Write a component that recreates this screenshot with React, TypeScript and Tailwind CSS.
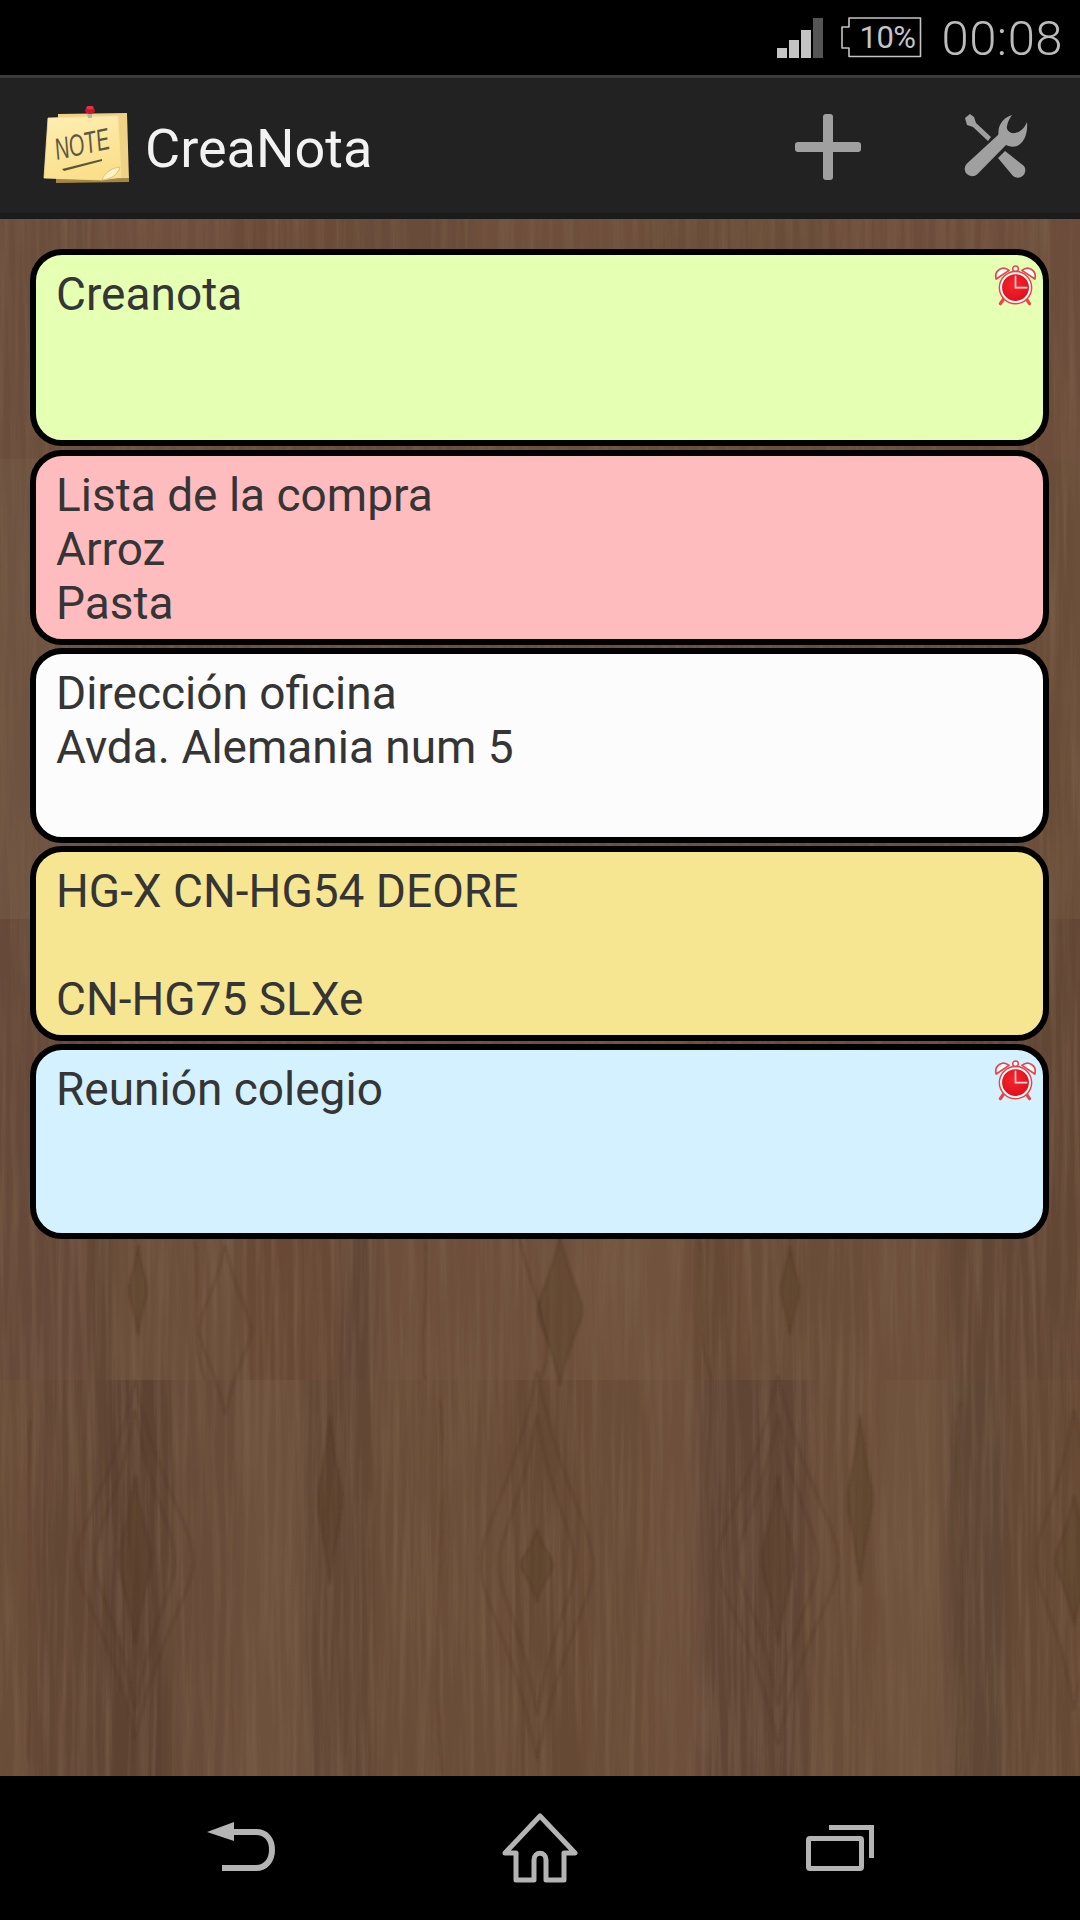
import React from 'react'

const rows = [
  {
    y: 219,
    h: 240,
    bands: [[0, 95, '#6b4e3a'], [95, 230, '#6e503c'], [230, 340, '#6a4c38'], [340, 470, '#684b37'], [470, 640, '#6d4f3b'], [640, 820, '#6b4d39'], [820, 1080, '#6c4e3a']],
  },
  {
    y: 459,
    h: 460,
    bands: [[0, 100, '#6e523f'], [100, 260, '#6a4d39'], [260, 400, '#70533e'], [400, 620, '#6c4f3a'], [620, 800, '#6e503c'], [800, 1080, '#6a4d39']],
  },
  {
    y: 919,
    h: 461,
    bands: [[0, 95, '#664a37'], [95, 110, '#5e4433'], [110, 240, '#6c4f3a'], [240, 340, '#674a36'], [340, 375, '#604534'], [375, 580, '#6d503a'], [580, 690, '#71533e'], [690, 740, '#664935'], [740, 870, '#6a4d38'], [870, 945, '#6d4f3a'], [945, 1080, '#634734']],
  },
  {
    y: 1380,
    h: 396,
    bands: [[0, 30, '#6b4e39'], [30, 100, '#634735'], [100, 170, '#5d4231'], [170, 240, '#684b37'], [240, 305, '#6e513c'], [305, 375, '#624735'], [375, 510, '#6a4d39'], [510, 585, '#664935'], [585, 650, '#6a4e39'], [650, 700, '#6d503a'], [700, 810, '#604534'], [810, 880, '#6a4d39'], [880, 945, '#70533e'], [945, 1010, '#614634'], [1010, 1080, '#664935']],
  },
] as const

const knots = [
  [135, 1560, 16, 85],
  [135, 1560, 40, 150],
  [135, 1560, 58, 180],
  [537, 1565, 16, 36],
  [537, 1565, 38, 150],
  [537, 1565, 56, 195],
  [778, 1560, 16, 85],
  [778, 1560, 40, 145],
  [778, 1560, 60, 185],
  [1074, 1560, 18, 65],
  [1074, 1560, 38, 150],
  [138, 1290, 9, 45],
  [790, 1290, 9, 45],
  [330, 1500, 12, 85],
  [860, 1500, 12, 85],
  [225, 1330, 26, 85],
  [560, 1310, 22, 75],
]

const grain = [
  'M195 1240 C200 1290 190 1340 205 1380',
  'M425 1240 C430 1290 420 1340 425 1380',
  'M520 1240 C530 1290 560 1340 540 1380',
  'M700 1240 C705 1290 695 1340 712 1380',
  'M30 1420 C25 1500 32 1620 28 1760',
  'M440 1400 C448 1500 430 1640 442 1776',
  'M960 1400 C950 1500 972 1660 960 1776',
  'M130 1120 C120 1160 150 1200 135 1240',
  'M780 1130 C800 1170 770 1210 790 1240',
]

function WoodBackground() {
  return (
    <svg className="absolute left-0 top-0" width="1080" height="1776" viewBox="0 0 1080 1776">
      <defs>
        <filter id="wood-grain" x="0" y="0" width="100%" height="100%">
          <feTurbulence type="fractalNoise" baseFrequency="0.16 0.006" numOctaves="4" seed="7" />
          <feColorMatrix values="0 0 0 0 0.2  0 0 0 0 0.12  0 0 0 0 0.07  2.2 0 0 0 -0.85" />
        </filter>
        <filter id="soft-bands" x="-5%" y="0" width="110%" height="100%">
          <feGaussianBlur stdDeviation="7 0" />
        </filter>
        <filter id="soft-line" x="-20%" y="-5%" width="140%" height="110%">
          <feGaussianBlur stdDeviation="1" />
        </filter>
      </defs>
      {rows.map((row) => (
        <svg key={row.y} x="0" y={row.y} width="1080" height={row.h} viewBox={`0 ${row.y} 1080 ${row.h}`}>
          <g filter="url(#soft-bands)">
            <rect x="-40" y={row.y} width="1160" height={row.h} fill={row.bands[0][2]} />
            {row.bands.map(([a, b, c]) => (
              <rect key={a} x={a} y={row.y} width={b - a} height={row.h} fill={c} />
            ))}
          </g>
        </svg>
      ))}
      <rect x="0" y="219" width="1080" height="1557" filter="url(#wood-grain)" opacity="0.6" />
      <g filter="url(#soft-line)">
        {knots.map(([x, y, w, h], i) => (
          <path
            key={i}
            d={`M${x} ${y - h} C${x + w * 0.4} ${y - h * 0.4} ${x + w} ${y - h * 0.2} ${x + w} ${y} C${x + w} ${y + h * 0.2} ${x + w * 0.4} ${y + h * 0.4} ${x} ${y + h} C${x - w * 0.4} ${y + h * 0.4} ${x - w} ${y + h * 0.2} ${x - w} ${y} C${x - w} ${y - h * 0.2} ${x - w * 0.4} ${y - h * 0.4} ${x} ${y - h}Z`}
            fill={w < 25 ? '#4d3526' : 'none'}
            fillOpacity="0.3"
            stroke="#49301f"
            strokeOpacity="0.3"
            strokeWidth="2"
          />
        ))}
        {grain.map((d) => (
          <path key={d} d={d} fill="none" stroke="#452e1f" strokeOpacity="0.4" strokeWidth="1.5" />
        ))}
      </g>
    </svg>
  )
}

function NoteLogo() {
  return (
    <svg width="90" height="80" viewBox="0 0 90 80" className="shrink-0">
      <defs>
        <linearGradient id="paper" x1="0" y1="0" x2="0.3" y2="1">
          <stop offset="0" stopColor="#fdeeb2" />
          <stop offset="1" stopColor="#fbe08b" />
        </linearGradient>
      </defs>
      <path d="M16 8 L85 7 L87 75 L14 76Z" fill="#efd283" />
      <path d="M14 73 L87 72 L87 76 L14 77Z" fill="#a58545" />
      <path d="M6 12 L76 10 L79 71 L60 74 L2 72Z" fill="url(#paper)" stroke="#f6e2a0" strokeWidth="0.8" />
      <path d="M60 74 C62 68 68 62 78 61 C76 68 70 73 60 74Z" fill="#fff2c4" stroke="#c7a65c" strokeWidth="0.6" />
      <path d="M46 12 L44 2 L50 2 L50 12Z" fill="#b8b2a0" />
      <ellipse cx="48" cy="4.5" rx="5" ry="3.5" fill="#c4172c" />
      <ellipse cx="48" cy="1.5" rx="3.5" ry="2" fill="#e23347" />
      <text
        x="0"
        y="0"
        fontSize="21"
        fontStyle="italic"
        fill="#5c5840"
        transform="translate(15 54) rotate(-12) scale(0.95 1.45)"
        className="font-['Liberation_Sans',sans-serif]"
      >
        NOTE
      </text>
      <path d="M20 63 L60 53 L60 55 L22 65Z" fill="#5b5638" />
    </svg>
  )
}

function ToolsIcon() {
  return (
    <svg width="64" height="64" viewBox="0 0 64 64" fill="#a0a0a0">
      <path d="M48 1 C41 3 35 9 34.5 17 C34.5 19 34.5 20 34 21 L2.7 49.7 A7.5 7.5 0 0 0 13.3 60.3 L42 31 C46 33 50 33 53 32 C60 29 64 20 63 8 C61 13 57 18 51 19 C46 20 42 16 43 12 C44 7 46 4 48 1Z" />
      <path d="M1 4 L6 0 L10 3 L12 9 L27 23 L24 27 L9 13 L3 11Z" />
      <path d="M41 37 L60 52 A7.5 7.5 0 0 1 49 62 L34 44Z" />
    </svg>
  )
}

function AlarmIcon() {
  return (
    <svg width="43" height="43" viewBox="0 0 40 40" className="absolute right-[6px] top-[10px]">
      <defs>
        <radialGradient id="alarm-red" cx="0.45" cy="0.4" r="0.7">
          <stop offset="0" stopColor="#f8252c" />
          <stop offset="1" stopColor="#d80f1b" />
        </radialGradient>
      </defs>
      <path d="M6 36 L10 30 M33 36 L29 30" stroke="#e6454c" strokeWidth="3" strokeLinecap="round" />
      <circle cx="20" cy="3.5" r="2.6" fill="#fff" stroke="#e6454c" strokeWidth="1.4" />
      <path d="M2 13 C0 5 8 0 14 5Z" fill="#fff" stroke="#e6454c" strokeWidth="1.6" strokeLinejoin="round" />
      <path d="M38 13 C40 5 32 0 26 5Z" fill="#fff" stroke="#e6454c" strokeWidth="1.6" strokeLinejoin="round" />
      <circle cx="20" cy="21" r="15" fill="#fff" stroke="#e6454c" strokeWidth="1.4" />
      <circle cx="20" cy="21" r="12.5" fill="url(#alarm-red)" />
      <path d="M20 10 V21 H31" fill="none" stroke="#ffd9d9" strokeWidth="1.5" />
    </svg>
  )
}

const notes = [
  { bg: 'bg-[#e5ffb3]', size: 'h-[197px] mb-[4px]', lines: ['Creanota'], alarm: true },
  { bg: 'bg-[#ffbcbf]', size: 'h-[195px] mb-[3px]', lines: ['Lista de la compra', 'Arroz', 'Pasta'] },
  { bg: 'bg-[#fcfcfc]', size: 'h-[195px] mb-[3px]', lines: ['Dirección oficina', 'Avda. Alemania num 5'] },
  { bg: 'bg-[#f7e691]', size: 'h-[195px] mb-[3px]', lines: ['HG-X CN-HG54 DEORE', '\u00a0', 'CN-HG75 SLXe'] },
  { bg: 'bg-[#d4f1ff]', size: 'h-[195px]', lines: ['Reunión colegio'], alarm: true },
]

export default function App() {
  return (
    <div className="w-[1080px] h-[1920px] flex flex-col bg-black overflow-hidden font-['Roboto',sans-serif]">
      {/* status bar */}
      <div className="h-[75px] shrink-0 bg-black flex items-center justify-end pr-[17px] text-[#bcbcbc]">
        <svg width="46" height="40" viewBox="0 0 46 40" className="mt-[1px]">
          <rect x="0" y="30" width="10" height="10" fill="#c4c4c4" />
          <rect x="12" y="22" width="10" height="18" fill="#c4c4c4" />
          <rect x="24" y="12" width="10" height="28" fill="#c4c4c4" />
          <rect x="36" y="0" width="10" height="40" fill="#555" />
        </svg>
        <div className="relative ml-[18px] w-[81px] h-[41px] flex items-center justify-center pl-[11px]">
          <svg width="81" height="41" viewBox="0 0 81 41" className="absolute left-0 top-0">
            <path d="M8 1 H79.5 V39.5 H8 V31 H1 V10 H8Z" fill="none" stroke="#c4c4c4" strokeWidth="1.6" strokeLinejoin="round" />
          </svg>
          <span className="relative text-[31px] leading-none text-[#c4c4c4] tracking-[-0.5px]">10%</span>
        </div>
        <span className="ml-[19px] mt-[2px] text-[49px] leading-none font-light tracking-[0.5px]">00:08</span>
      </div>
      <div className="h-[3px] shrink-0 bg-[#3b3b3b]" />

      {/* action bar */}
      <header className="h-[135px] shrink-0 bg-[#222222] flex items-center pl-[42px]">
        <NoteLogo />
        <h1 className="ml-[13px] mt-[6px] text-[54px] leading-none text-[#f2f2f2] font-normal">CreaNota</h1>
        <svg width="66" height="66" viewBox="0 0 66 66" fill="#a0a0a0" className="ml-auto mt-[2px]">
          <rect x="28" y="0" width="10" height="66" rx="3" />
          <rect x="0" y="28" width="66" height="10" rx="3" />
        </svg>
        <div className="ml-[103px] mr-[52px] mt-[1px]">
          <ToolsIcon />
        </div>
      </header>
      <div className="h-[6px] shrink-0 bg-[#1b1b1b]" />

      {/* notes */}
      <main className="relative flex-1 -mt-[219px] pt-[249px] px-[30px]">
        <WoodBackground />
        <div className="relative flex flex-col w-[1019px]">
          {notes.map((note) => (
            <div
              key={note.lines[0]}
              className={`relative border-[6px] border-black rounded-[32px] pl-[20px] pt-[12px] text-[46px] leading-[54px] text-[#353535] ${note.bg} ${note.size}`}
            >
              {note.lines.map((line, i) => (
                <div key={i}>{line}</div>
              ))}
              {note.alarm && <AlarmIcon />}
            </div>
          ))}
        </div>
      </main>

      {/* nav bar */}
      <nav className="relative h-[144px] shrink-0 bg-black flex items-center pl-[207px]">
        <svg width="68" height="50" viewBox="0 0 68 50" className="-mt-[2px]">
          <path d="M0 10 L27 0 V19Z" fill="#b4b4b4" />
          <path d="M24 10 H49 C59 10 65 17 65 28 C65 38 59 46 49 46 H15" fill="none" stroke="#b4b4b4" strokeWidth="6" />
        </svg>
        <svg width="76" height="70" viewBox="0 0 76 70" className="ml-[227px]">
          <path d="M38 3 L73 40 H62 V67 H44 V47 C44 38 32 38 32 47 V67 H14 V40 H3Z" fill="none" stroke="#b4b4b4" strokeWidth="5" strokeLinejoin="round" />
        </svg>
        <svg width="68" height="46" viewBox="0 0 68 46" className="ml-[228px]">
          <path d="M23 2.5 H65.5 V33" fill="none" stroke="#b4b4b4" strokeWidth="5" />
          <rect x="2.5" y="13.5" width="53" height="30" rx="1.5" fill="none" stroke="#b4b4b4" strokeWidth="5" />
        </svg>
      </nav>
    </div>
  )
}
